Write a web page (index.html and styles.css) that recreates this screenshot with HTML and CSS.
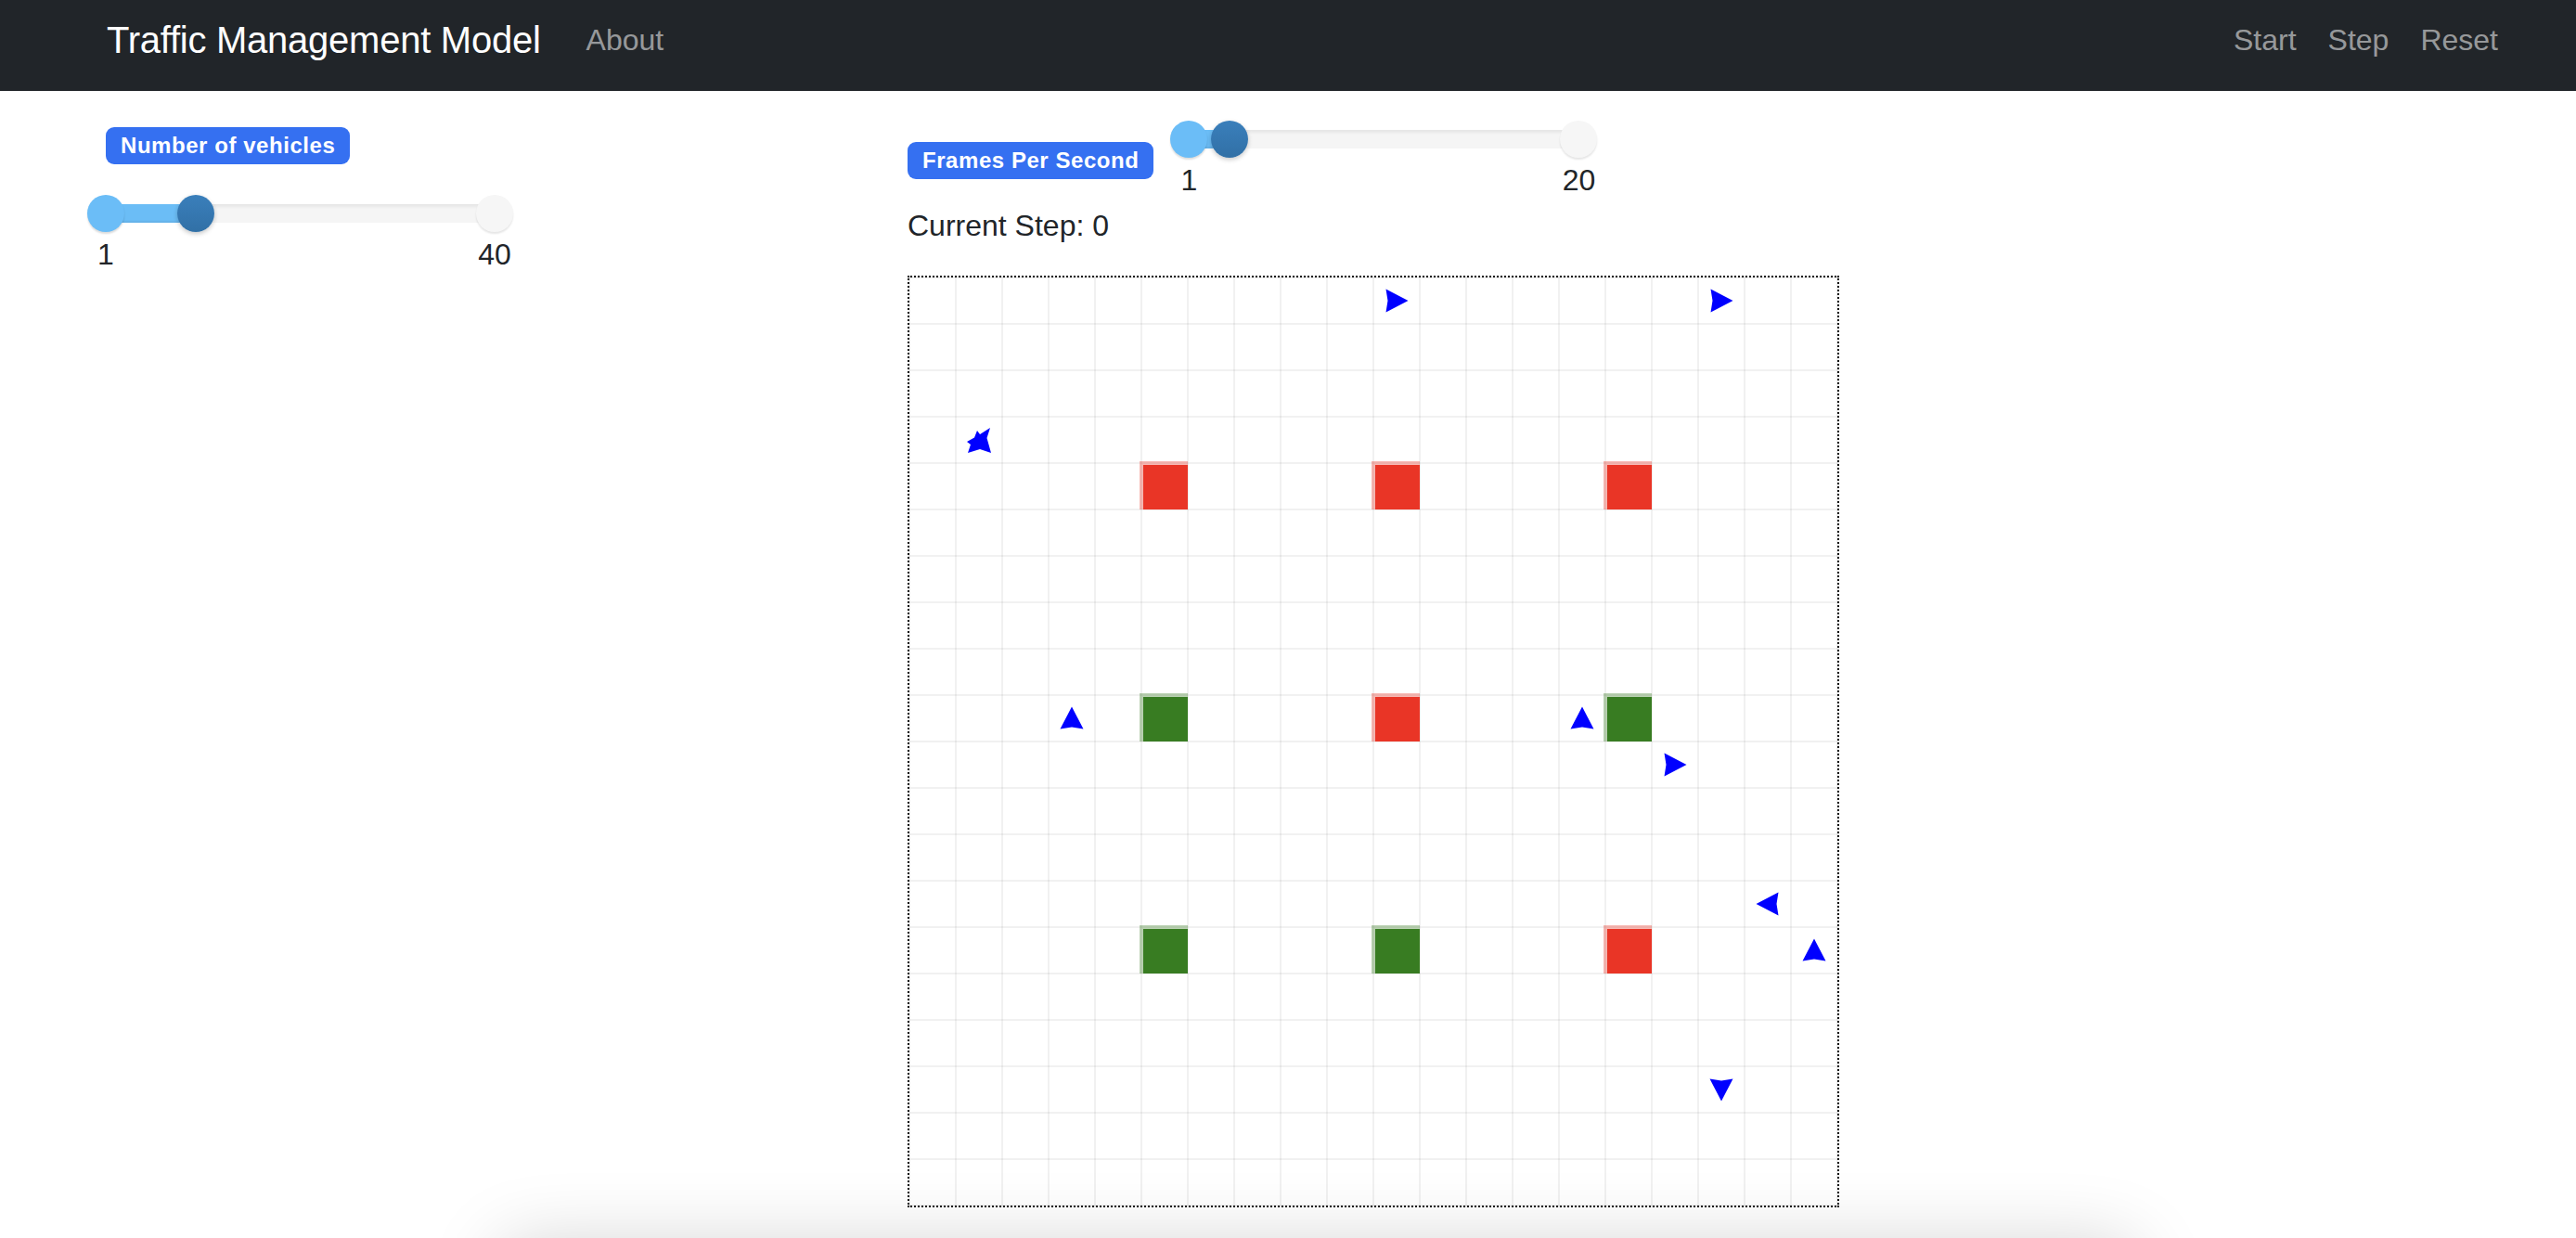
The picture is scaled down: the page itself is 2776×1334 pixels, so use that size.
FILE: index.html
```html
<!DOCTYPE html>
<html lang="en">
<head>
<meta charset="utf-8">
<title>Traffic Management Model</title>
<link rel="stylesheet" href="styles.css">
</head>
<body>
<nav class="navbar">
  <a class="brand">Traffic Management Model</a>
  <a class="nav-link">About</a>
  <div class="nav-right">
    <a class="nav-link">Start</a>
    <a class="nav-link">Step</a>
    <a class="nav-link">Reset</a>
  </div>
</nav>
<main class="main">
  <section class="left">
    <span class="badge">Number of vehicles</span>
    <div class="range range-vehicles">
      <div class="slider">
        <div class="track"></div>
        <div class="fill" style="width:97px"></div>
        <span class="handle handle-min"></span>
        <span class="handle handle-value" style="left:97px"></span>
        <span class="handle handle-max"></span>
      </div>
      <div class="range-labels"><span>1</span><span>40</span></div>
    </div>
  </section>
  <section class="right">
    <div class="fps-row">
      <span class="badge">Frames Per Second</span>
      <div class="range range-fps">
        <div class="slider">
          <div class="track"></div>
          <div class="fill" style="width:44px"></div>
          <span class="handle handle-min"></span>
          <span class="handle handle-value" style="left:44px"></span>
          <span class="handle handle-max"></span>
        </div>
        <div class="range-labels"><span>1</span><span>20</span></div>
      </div>
    </div>
    <p class="step">Current Step: 0</p>
    <div class="grid-canvas">
      <div class="light red" style="grid-area:5/6"></div>
      <div class="light red" style="grid-area:5/11"></div>
      <div class="light red" style="grid-area:5/16"></div>
      <div class="light green" style="grid-area:10/6"></div>
      <div class="light red" style="grid-area:10/11"></div>
      <div class="light green" style="grid-area:10/16"></div>
      <div class="light green" style="grid-area:15/6"></div>
      <div class="light green" style="grid-area:15/11"></div>
      <div class="light red" style="grid-area:15/16"></div>

      <svg class="car east" style="grid-area:1/11" viewBox="0 0 26 26"><path d="M1.5 0.5 L25.5 13 L1.5 25.5 L3.5 13 Z"/></svg>
      <svg class="car east" style="grid-area:1/18" viewBox="0 0 26 26"><path d="M1.5 0.5 L25.5 13 L1.5 25.5 L3.5 13 Z"/></svg>
      <svg class="car crash" style="grid-area:4/2" viewBox="0 0 26 27"><path d="M11 3 L14 7 L25 0 L21.5 11 L26 27 L14 23 L1 27 L4 18 L0 15 L8 10.5 Z"/></svg>
      <svg class="car north" style="grid-area:10/4" viewBox="0 0 26 26"><path d="M1.5 0.5 L25.5 13 L1.5 25.5 L3.5 13 Z"/></svg>
      <svg class="car north" style="grid-area:10/15" viewBox="0 0 26 26"><path d="M1.5 0.5 L25.5 13 L1.5 25.5 L3.5 13 Z"/></svg>
      <svg class="car east" style="grid-area:11/17" viewBox="0 0 26 26"><path d="M1.5 0.5 L25.5 13 L1.5 25.5 L3.5 13 Z"/></svg>
      <svg class="car west" style="grid-area:14/19" viewBox="0 0 26 26"><path d="M1.5 0.5 L25.5 13 L1.5 25.5 L3.5 13 Z"/></svg>
      <svg class="car north" style="grid-area:15/20" viewBox="0 0 26 26"><path d="M1.5 0.5 L25.5 13 L1.5 25.5 L3.5 13 Z"/></svg>
      <svg class="car south" style="grid-area:18/18" viewBox="0 0 26 26"><path d="M1.5 0.5 L25.5 13 L1.5 25.5 L3.5 13 Z"/></svg>
    </div>
  </section>
</main>
<div class="chart-shadow"></div>
</body>
</html>
```
FILE: styles.css
```css
html, body {
  margin: 0;
  padding: 0;
  overflow: hidden;
  background: #fff;
}
body {
  font-family: "Liberation Sans", Arial, sans-serif;
  color: #212529;
}
a { text-decoration: none; }

.navbar {
  height: 98px;
  box-sizing: border-box;
  background: #212529;
  display: flex;
  align-items: flex-start;
  padding: 0 67px 0 115px;
}
.brand {
  font-size: 40px;
  line-height: 60px;
  margin-top: 13px;
  margin-right: 32px;
  letter-spacing: -0.25px;
  color: #fff;
  white-space: nowrap;
}
.nav-link {
  font-size: 32px;
  line-height: 38px;
  margin-top: 24px;
  padding: 0 17px;
  color: rgba(255, 255, 255, 0.55);
}
.nav-right {
  margin-left: auto;
  display: flex;
}

.main {
  display: flex;
  align-items: flex-start;
}
.left {
  width: 978px;
  flex: none;
  box-sizing: border-box;
  padding: 39px 0 0 94px;
  display: flex;
  flex-direction: column;
  align-items: flex-start;
}
.left .badge { margin-left: 20px; }

.badge {
  display: inline-block;
  background: #3570f1;
  color: #fff;
  font-weight: 700;
  font-size: 24px;
  line-height: 24px;
  padding: 8px 16px;
  border-radius: 9px;
  letter-spacing: 0.55px;
  white-space: nowrap;
}

.range-vehicles { width: 459px; margin-top: 33px; }
.range-fps { width: 460px; margin-left: 18px; }

.slider {
  position: relative;
  height: 40px;
}
.track {
  position: absolute;
  left: 20px;
  right: 20px;
  top: 10px;
  height: 20px;
  background: #f5f5f5;
  box-shadow: inset 0 3px 3px rgba(0, 0, 0, 0.06);
}
.fill {
  position: absolute;
  left: 20px;
  top: 10px;
  height: 20px;
  background: #6bbdf6;
  box-shadow: inset 0 -2px 2px rgba(0, 0, 0, 0.06);
}
.handle {
  position: absolute;
  top: 0;
  width: 40px;
  height: 40px;
  border-radius: 50%;
}
.handle-min {
  left: 0;
  background: #6bbdf7;
  box-shadow: 0 2px 2px rgba(0, 0, 0, 0.14);
}
.handle-value {
  background: linear-gradient(#3a7fbb, #3170a6);
  box-shadow: 0 2px 5px rgba(0, 0, 0, 0.22);
}
.handle-max {
  right: 0;
  background: #f6f6f6;
  box-shadow: 0 2px 2px rgba(0, 0, 0, 0.1);
}
.range-labels {
  display: flex;
  justify-content: space-between;
  margin-top: 5px;
  font-size: 32px;
  line-height: 38px;
}
.range-labels span {
  width: 40px;
  text-align: center;
}

.right {
  padding-top: 32px;
  display: flex;
  flex-direction: column;
  align-items: flex-start;
}
.fps-row {
  display: flex;
  align-items: flex-start;
}
.fps-row .badge { margin-top: 23px; }
.step {
  margin: 11px 0 0;
  font-size: 32px;
  line-height: 38px;
}

.grid-canvas {
  margin-top: 35px;
  width: 1000px;
  height: 1000px;
  border: 2px dotted #111;
  display: grid;
  grid-template-columns: repeat(20, 50px);
  grid-template-rows: repeat(20, 50px);
  background-image:
    linear-gradient(to right, rgba(0, 0, 0, 0.055) 2px, transparent 2px),
    linear-gradient(to bottom, rgba(0, 0, 0, 0.055) 2px, transparent 2px);
  background-size: 50px 50px;
  background-position: -1px -1px;
}
.light {
  width: 52px;
  height: 52px;
  box-sizing: border-box;
  margin: -2px 0 0 -2px;
  border-top: 4px solid;
  border-left: 4px solid;
}
.light.red {
  background: #e93526;
  background-clip: padding-box;
  border-color: rgba(233, 53, 38, 0.35);
}
.light.green {
  background: #387c22;
  background-clip: padding-box;
  border-color: rgba(56, 124, 34, 0.35);
}
.car {
  width: 26px;
  height: 26px;
  place-self: center;
  fill: #0000ff;
}
.car.crash { height: 27px; }
.car.north { transform: rotate(-90deg); }
.car.south { transform: rotate(90deg); }
.car.west { transform: rotate(180deg); }

.chart-shadow {
  margin: 40px 0 0 540px;
  width: 1760px;
  height: 300px;
  border-radius: 20px;
  background: #fff;
  box-shadow: 0 0 80px rgba(0, 0, 0, 0.18);
}
```
